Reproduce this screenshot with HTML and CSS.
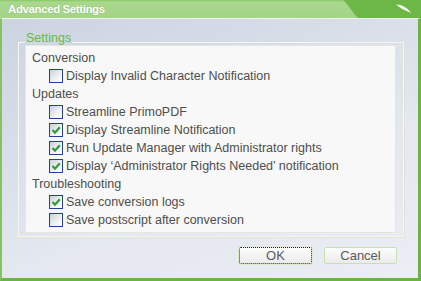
FILE: index.html
```html
<!DOCTYPE html>
<html lang="en">
<head>
    <meta charset="UTF-8">
    <title>Advanced Settings</title>
    <link rel="stylesheet" href="styles.css">
</head>
<body>
    <div class="window">
        <div class="titlebar">
            <span class="title">Advanced Settings</span>
            <svg class="title-deco" width="78" height="18" viewBox="0 0 78 18">
                <path d="M0 0 H78 V18 H15 C9 12 5 4 0 0 Z" fill="#6db747"/>
                <path d="M53 4.5 C59 4.5 64 7.5 68 13 C62 10 57 8.5 53 4.5 Z" fill="#ffffff" opacity="0.95"/>
            </svg>
        </div>

        <div class="client">
            <fieldset class="group">
                <legend>Settings</legend>
                <div class="panel">
                    <div class="row heading">Conversion</div>
                    <div class="row item"><span class="check"></span>Display Invalid Character Notification</div>

                    <div class="row heading">Updates</div>
                    <div class="row item"><span class="check"></span>Streamline PrimoPDF</div>
                    <div class="row item"><span class="check checked"><svg width="12" height="12" viewBox="0 0 12 12"><path d="M2.5 6 L5 8.7 L9.8 3.2" fill="none" stroke="#2e9b32" stroke-width="2.2"/></svg></span>Display Streamline Notification</div>
                    <div class="row item"><span class="check checked"><svg width="12" height="12" viewBox="0 0 12 12"><path d="M2.5 6 L5 8.7 L9.8 3.2" fill="none" stroke="#2e9b32" stroke-width="2.2"/></svg></span>Run Update Manager with Administrator rights</div>
                    <div class="row item"><span class="check checked"><svg width="12" height="12" viewBox="0 0 12 12"><path d="M2.5 6 L5 8.7 L9.8 3.2" fill="none" stroke="#2e9b32" stroke-width="2.2"/></svg></span>Display &lsquo;Administrator Rights Needed&rsquo; notification</div>

                    <div class="row heading">Troubleshooting</div>
                    <div class="row item"><span class="check checked"><svg width="12" height="12" viewBox="0 0 12 12"><path d="M2.5 6 L5 8.7 L9.8 3.2" fill="none" stroke="#2e9b32" stroke-width="2.2"/></svg></span>Save conversion logs</div>
                    <div class="row item"><span class="check"></span>Save postscript after conversion</div>
                </div>
            </fieldset>

            <div class="buttons">
                <button class="btn focused">OK</button>
                <button class="btn">Cancel</button>
            </div>
        </div>
    </div>
</body>
</html>
```

FILE: styles.css
```css
body {
    margin: 0;
    padding: 0;
    font-family: "Liberation Sans", Arial, sans-serif;
    background-color: #ffffff;
}
.window {
    width: 421px;
    height: 281px;
    display: flex;
    flex-direction: column;
}
.titlebar {
    height: 18px;
    display: flex;
    align-items: center;
    background: linear-gradient(#86c862 0, #a9d88e 2px, #a3d487 100%);
}
.title {
    margin-left: 8px;
    color: #ffffff;
    font-size: 11.5px;
    font-weight: bold;
    letter-spacing: -0.4px;
    text-shadow: 0 0 1px rgba(80, 140, 50, 0.5);
}
.title-deco {
    margin-left: auto;
    display: block;
}
.client {
    flex: 1;
    display: flex;
    flex-direction: column;
    border-left: 2px solid #84c460;
    border-right: 3px solid #6ab444;
    border-bottom: 3px solid #6ab444;
    border-top: 1px solid #edf3ea;
    padding-left: 1px;
    background: linear-gradient(160deg, #ccd4e1 0%, #e3e7ee 60%, #ebeef3 100%);
}
.group {
    margin: 13px 14px 0 15px;
    padding: 0 7px 3px 6px;
    border: 1px solid #f3f6f0;
    box-shadow: 1px 1px 0 #dfe6d8;
}
.group legend {
    padding: 0 1px 7px;
    font-size: 12.5px;
    line-height: 13px;
    color: #6cb844;
}
.panel {
    margin-top: -7px;
    padding: 3px 0 3px 6px;
    background-color: #f8f8f8;
    border: 1px solid #e3e7df;
}
.row {
    height: 18px;
    display: flex;
    align-items: center;
    font-size: 12.5px;
    color: #4e4e4e;
    white-space: nowrap;
}
.item {
    padding-left: 17px;
}
.check {
    width: 12px;
    height: 12px;
    margin-right: 3px;
    border: 1px solid #22409a;
    background: linear-gradient(135deg, #c9cfda 0%, #eef0f2 55%, #ffffff 100%);
    display: flex;
}
.buttons {
    display: flex;
    justify-content: flex-end;
    gap: 12px;
    margin: 10px 21px 0 0;
}
.btn {
    width: 73px;
    height: 17px;
    padding: 0;
    font-family: "Liberation Sans", Arial, sans-serif;
    font-size: 13px;
    line-height: 15px;
    color: #5a5a5a;
    background: linear-gradient(#fdfdfd, #ebebeb);
    border: 1px solid #c6e0b2;
    border-radius: 2px;
}
.btn.focused {
    border: 1px dotted #222222;
    box-shadow: 0 0 0 1px #dcecd0;
}
```
